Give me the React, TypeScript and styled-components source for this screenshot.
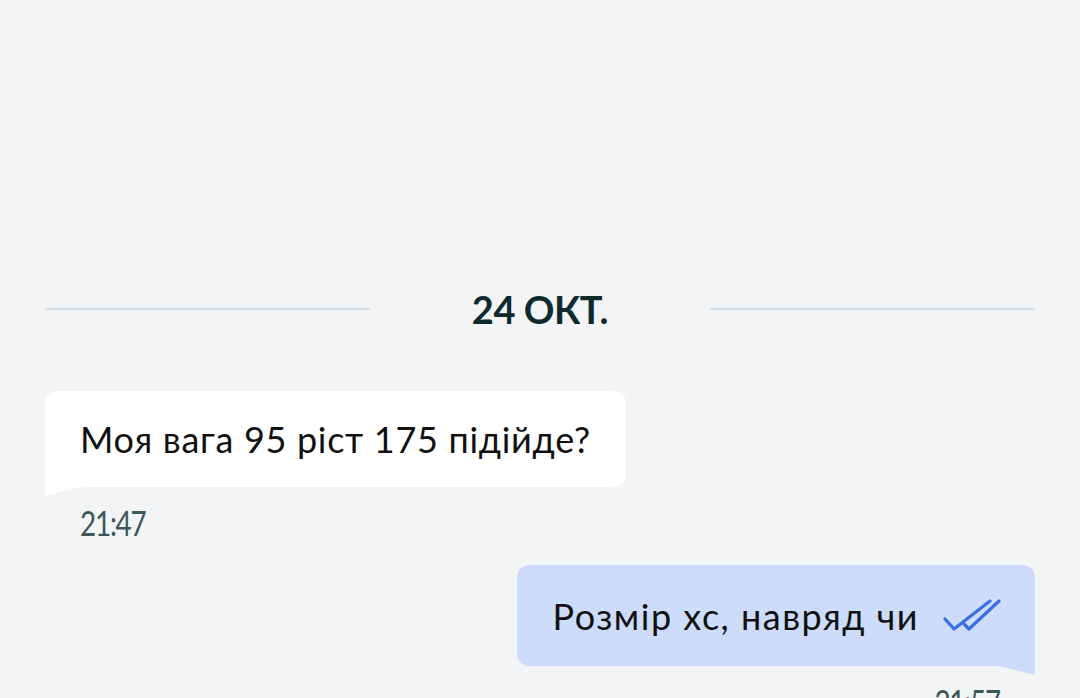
import React from "react";
import styled, { createGlobalStyle } from "styled-components";

const Global = createGlobalStyle`
  html, body { margin: 0; padding: 0; background: #f2f4f6; }
  body { font-family: Lato, "Noto Sans", sans-serif; }
`;

const Page = styled.div`
  width: 1080px;
  height: 698px;
  overflow: hidden;
  background: #f2f4f6;
  box-sizing: border-box;
  padding: 286px 45px 0;
  display: flex;
  flex-direction: column;
`;

const DateRow = styled.div`
  display: flex;
  align-items: center;
  gap: 102px;
  height: 46px;
`;

const Line = styled.div`
  flex: 1;
  height: 2px;
  background: #d5dbe1;
`;

const DateLabel = styled.div`
  font-size: 38px;
  font-weight: 700;
  color: #0f2a2e;
  letter-spacing: -0.5px;
`;

const Row = styled.div<{ $out?: boolean }>`
  display: flex;
  flex-direction: column;
  align-items: ${(p) => (p.$out ? "flex-end" : "flex-start")};
  margin-top: ${(p) => (p.$out ? "22px" : "59px")};
`;

const Bubble = styled.div<{ $out?: boolean }>`
  position: relative;
  box-sizing: border-box;
  height: ${(p) => (p.$out ? "101px" : "96px")};
  padding: 0 ${(p) => (p.$out ? "34px" : "35px")} 0 35px;
  display: flex;
  align-items: center;
  gap: 24px;
  background: ${(p) => (p.$out ? "#cddcfa" : "#ffffff")};
  border-radius: ${(p) => (p.$out ? "12px 12px 0 12px" : "12px 12px 12px 0")};
  font-size: 36px;
  letter-spacing: ${(p) => (p.$out ? "1.5px" : "0.7px")};
  color: #111;
  &::after {
    content: "";
    position: absolute;
    top: 100%;
    width: 36px;
    height: 9px;
    background: inherit;
    ${(p) =>
      p.$out
        ? "right: 0; clip-path: polygon(0 0, 100% 0, 100% 100%);"
        : "left: 0; clip-path: polygon(0 0, 100% 0, 0 100%);"}
  }
`;

const Time = styled.div<{ $out?: boolean }>`
  margin: 15px 35px 0;
  font-size: 34px;
  font-weight: 400;
  color: #3d5658;
  letter-spacing: -1.5px;
  transform: scaleX(0.82);
  transform-origin: ${(p) => (p.$out ? "right" : "left")} center;
`;

const Check = () => (
  <svg width="58" height="34" viewBox="0 0 58 34" fill="none">
    <path
      d="M2 20 L11 30 L47 2"
      stroke="#3b6ee0"
      strokeWidth="3.2"
      strokeLinecap="round"
      strokeLinejoin="round"
    />
    <path
      d="M21 25 L26 30 L56 2"
      stroke="#3b6ee0"
      strokeWidth="3.2"
      strokeLinecap="round"
      strokeLinejoin="round"
    />
  </svg>
);

export default function App() {
  return (
    <>
      <Global />
      <Page>
        <DateRow>
          <Line />
          <DateLabel>24 ОКТ.</DateLabel>
          <Line />
        </DateRow>
        <Row>
          <Bubble>Моя вага 95 ріст 175 підійде?</Bubble>
          <Time>21:47</Time>
        </Row>
        <Row $out>
          <Bubble $out>
            Розмір хс, навряд чи
            <Check />
          </Bubble>
          <Time $out>21:57</Time>
        </Row>
      </Page>
    </>
  );
}
